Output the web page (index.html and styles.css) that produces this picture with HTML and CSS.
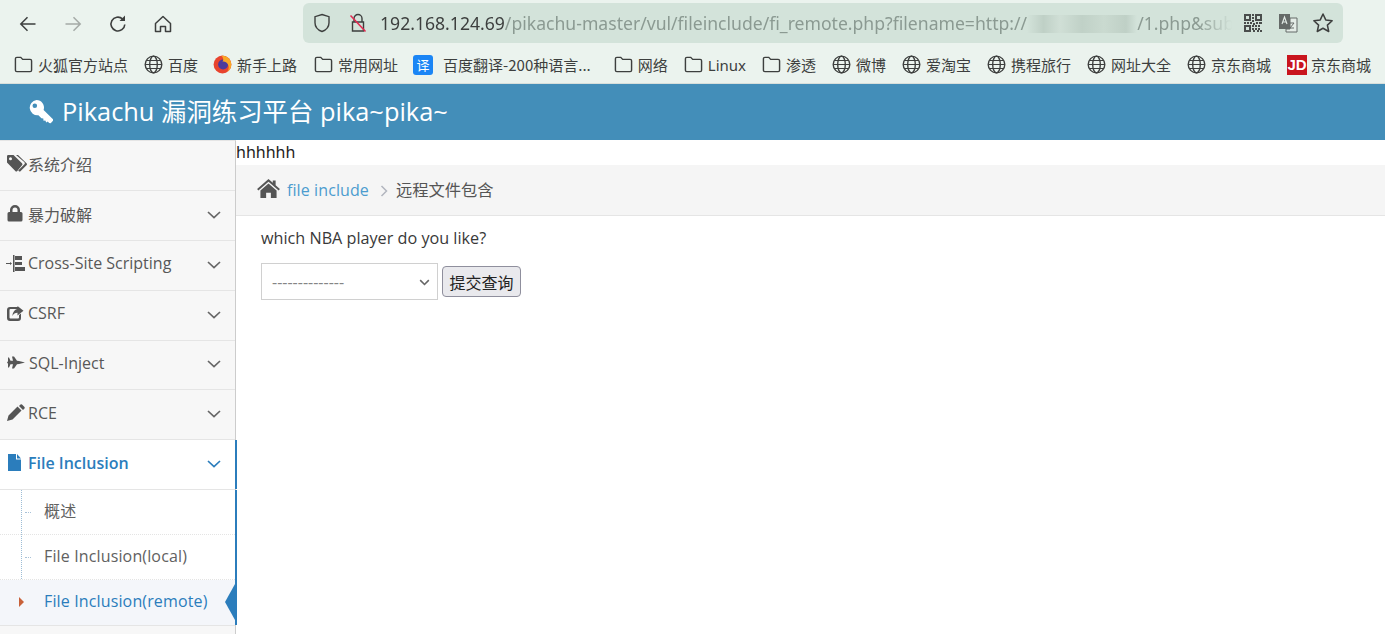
FILE: index.html
```html
<!DOCTYPE html>
<html lang="zh">
<head>
<meta charset="utf-8">
<title>Pikachu</title>
<link rel="stylesheet" href="styles.css">
</head>
<body>
<svg class="defs" width="0" height="0" aria-hidden="true">
  <defs>
    <symbol id="folder" viewBox="0 0 16 16"><path d="M1.200 3.200q0-1.200 1.200-1.200h3.300l1.600 1.700h6.300q1.200 0 1.200 1.200v7.900q0 1.200-1.200 1.200H2.400q-1.200 0-1.200-1.200z" fill="none" stroke="#3d3f3e" stroke-width="1.200"/></symbol>
    <symbol id="globe" viewBox="0 0 16 16"><g fill="none" stroke="#3d3f3e" stroke-width="1.150"><circle cx="8" cy="8" r="7"/><ellipse cx="8" cy="8" rx="3.200" ry="7"/><path d="M1 8h14M2 4.600h12M2 11.400h12" stroke-width=".9"/></g></symbol>
    <symbol id="chev" viewBox="0 0 14 8"><path d="M1 1l6 5.600L13 1" fill="none" stroke="currentColor" stroke-width="1.700"/></symbol>
  </defs>
</svg>

<div class="chrome">
  <div class="toolbar">
    <div class="nav">
      <svg class="nav-ico" viewBox="0 0 20 20"><path d="M17.500 10H3M9.500 3.200L2.800 10l6.700 6.800" fill="none" stroke="#3d3f3e" stroke-width="1.500"/></svg>
      <svg class="nav-ico" viewBox="0 0 20 20"><path d="M2.500 10H17M10.500 3.200l6.700 6.800-6.700 6.800" fill="none" stroke="#a5aaa7" stroke-width="1.500"/></svg>
      <svg class="nav-ico" viewBox="0 0 20 20"><path d="M16.800 10.500a6.900 6.900 0 1 1-2.300-5.600" fill="none" stroke="#3d3f3e" stroke-width="1.600"/><path d="M17 1.500v5.500h-5.500z" fill="#3d3f3e"/></svg>
      <svg class="nav-ico" viewBox="0 0 20 20"><path d="M2.500 9.500L10 2.500l7.500 7v8h-5v-5h-5v5h-5z" fill="none" stroke="#3d3f3e" stroke-width="1.500" stroke-linejoin="round"/></svg>
    </div>
    <div class="urlbar">
      <svg class="shield" viewBox="0 0 18 20"><path d="M9 1.500l7 2.200v6c0 4.300-3 7.300-7 8.800-4-1.500-7-4.500-7-8.800v-6z" fill="none" stroke="#3d3f3e" stroke-width="1.400"/></svg>
      <svg class="lock" viewBox="0 0 18 20"><path d="M5 9V5.500a4 4 0 0 1 8 0V9M3.500 9h11v9h-11z" fill="none" stroke="#3d3f3e" stroke-width="1.400"/><path d="M1.500 2.500l15 16" stroke="#e22850" stroke-width="1.500"/></svg>
      <div class="url"><span class="host">192.168.124.69</span>/pikachu-master/vul/fileinclude/fi_remote.php?filename=http://<span class="blur"></span>/1.php&amp;sub</div>
      <svg class="qr" viewBox="0 0 18 18"><path fill="#4a4d4c" fill-rule="evenodd" d="M0 0h7v7H0zM2 2v3h3V2zM11 0h7v7h-7zM13 2v3h3V2zM0 11h7v7H0zM2 13v3h3v-3zM8 0h2v2H8zM8 3h2v2H8zM8 6h2v2H8zM0 8h2v2H0zM3 8h2v2H3zM6 8h2v2H6zM9 9h2v2H9zM12 8h2v2h-2zM15 8h3v2h-3zM8 11h2v2H8zM11 11h2v2h-2zM14 11h2v2h-2zM8 14h2v2H8zM11 14h2v2h-2zM14 14h2v2h-2zM9 16h2v2H9zM13 16h2v2h-2zM16 16h2v2h-2z"/></svg>
      <svg class="trans" viewBox="0 0 20 20"><path d="M1 1h11v15H1z" fill="#656a68"/><path d="M12 5h7v14H8v-3h4z" fill="#e4ece7" stroke="#656a68"/><path d="M4 11l2.500-7L9 11M5 9h3" fill="none" stroke="#e4ece7" stroke-width="1.100"/><path d="M12 10h4l-4 5h4" fill="none" stroke="#656a68"/></svg>
      <svg class="star" viewBox="0 0 20 20"><path d="M10 1.800l2.500 5.400 5.800.7-4.300 4 1.200 5.800-5.200-2.900-5.200 2.900 1.200-5.800-4.300-4 5.800-.7z" fill="none" stroke="#3d3f3e" stroke-width="1.400" stroke-linejoin="round"/></svg>
    </div>
  </div>
  <div class="bookmarks">
    <div class="bm b1"><svg class="bi"><use href="#folder"/></svg>火狐官方站点</div>
    <div class="bm b2"><svg class="bi"><use href="#globe"/></svg>百度</div>
    <div class="bm b3"><svg class="bi" viewBox="0 0 16 16"><circle cx="8" cy="8" r="7.500" fill="#e8442e"/><circle cx="8.500" cy="8" r="4.200" fill="#4a3a9c"/><path d="M7 .6c4.500-.6 8.400 3 8.400 7.400 0 2.600-1.300 4.800-3.300 6.100 1.400-2 1.500-4.600.4-6.300C11.400 6 9.800 5.200 8 5.600c1-1.200 1-3.400-1-5z" fill="#f9a825"/></svg>新手上路</div>
    <div class="bm b4"><svg class="bi"><use href="#folder"/></svg>常用网址</div>
    <div class="bm b5"><span class="yi">译</span>百度翻译-200种语言...</div>
    <div class="bm b6"><svg class="bi"><use href="#folder"/></svg>网络</div>
    <div class="bm b7"><svg class="bi"><use href="#folder"/></svg>Linux</div>
    <div class="bm b8"><svg class="bi"><use href="#folder"/></svg>渗透</div>
    <div class="bm b9"><svg class="bi"><use href="#globe"/></svg>微博</div>
    <div class="bm b10"><svg class="bi"><use href="#globe"/></svg>爱淘宝</div>
    <div class="bm b11"><svg class="bi"><use href="#globe"/></svg>携程旅行</div>
    <div class="bm b12"><svg class="bi"><use href="#globe"/></svg>网址大全</div>
    <div class="bm b13"><svg class="bi"><use href="#globe"/></svg>京东商城</div>
    <div class="bm b14"><span class="jd">JD</span>京东商城</div>
  </div>
</div>

<header class="brand">
  <svg class="key" viewBox="0 0 24 24"><path fill="#fff" fill-rule="evenodd" d="M7.500 0a7.500 7.500 0 0 1 7.100 9.900L24 19.300v1.400l-2.300 2.600-1.600-.2-1.300-1.500-1.500 1-1-2.200-1.800.3-.2-2.100-1.900-.3-3-3A7.500 7.500 0 1 1 7.500 0zM5.800 3.500a2.300 2.300 0 1 0 0 4.600 2.300 2.300 0 0 0 0-4.600z"/></svg>
  <span>Pikachu 漏洞练习平台 pika~pika~</span>
</header>

<div class="main">
  <nav class="sidebar">
    <div class="item">
      <svg class="ico" viewBox="0 0 20 17"><path fill="#555" fill-rule="evenodd" d="M0 1.200Q0 0 1.200 0h5.300L15 8.200q1 1 0 2L10.300 16q-1 1-2 0L0 7.500zM3.500 2.300a1.500 1.500 0 1 0 0 3 1.500 1.500 0 0 0 0-3z"/><path fill="#555" d="M9 0h2l8.500 8.200q1 1 0 2l-5.800 5.800q-1 1-2 0l-.5-.5 6-6q1.300-1.300 0-2.600z"/></svg>
      <span class="label">系统介绍</span>
    </div>
    <div class="item">
      <svg class="ico" viewBox="0 0 20 17"><path fill="#555" d="M3 7V5a5 5 0 0 1 10 0v2h1q1.500 0 1.500 1.500V15q0 1.500-1.500 1.500H2Q.5 16.500.5 15V8.500Q.5 7 2 7zm2.500 0h5V5a2.500 2.500 0 0 0-5 0z"/></svg>
      <span class="label">暴力破解</span><svg class="chev"><use href="#chev"/></svg>
    </div>
    <div class="item">
      <svg class="ico wide" viewBox="0 0 20 17"><path fill="#555" d="M0 8h4v1H0zM4 7l2 1.500L4 10zM7 0h1.500v17H7zM9 1h4v4H9zM9 7h3v3H9zM9 12h10v4H9zM13 1h3v4h-3zM12 7h4v3h-4z"/></svg>
      <span class="label">Cross-Site Scripting</span><svg class="chev"><use href="#chev"/></svg>
    </div>
    <div class="item">
      <svg class="ico" viewBox="0 0 20 17"><path fill="#555" d="M3 2h8v2H3.500Q2.500 4 2.500 5v7.500q0 1 1 1H11q1 0 1-1V10l2-1.500V13q0 3-3 3H3q-3 0-3-3V5q0-3 3-3z"/><path fill="#555" d="M10.500 1l6 4.800-6 4.700V7.800C8 7.800 6.500 9 5.500 11c0-3.500 2-6.500 5-7z"/></svg>
      <span class="label">CSRF</span><svg class="chev"><use href="#chev"/></svg>
    </div>
    <div class="item">
      <svg class="ico" viewBox="0 0 20 17"><path fill="#555" d="M1 3.500h1L3.500 6.700H6L5 2.500h2l3 4.200 2 .2 6 1.600-6 1.600-2 .2-3 4.200H5l1-4.200H3.500L2 13.500H1V9.800L0 8.500l1-1.300z"/></svg>
      <span class="label sql">SQL-Inject</span><svg class="chev"><use href="#chev"/></svg>
    </div>
    <div class="item">
      <svg class="ico" viewBox="0 0 20 17"><path fill="#555" d="M13.500 0.500q1-.5 1.500 0l2.500 2.500q.5.500 0 1.500l-1.500 1.500-4-4zM10.500 2.500l4 4-9 9-5.500 1.500 1.500-5.500z"/></svg>
      <span class="label">RCE</span><svg class="chev"><use href="#chev"/></svg>
    </div>
    <div class="item open">
      <svg class="ico file" viewBox="0 0 20 17"><path fill="#2b7dbc" d="M0 0h8v5.500h5V17H0zM9 0l4 4.500H9z"/></svg>
      <span class="label">File Inclusion</span><svg class="chev"><use href="#chev"/></svg>
    </div>
    <ul class="sub">
      <li class="sub-item">概述</li>
      <li class="sub-item">File Inclusion(local)</li>
      <li class="sub-item active">File Inclusion(remote)</li>
    </ul>
  </nav>

  <div class="content">
    <div class="hhh">hhhhhh</div>
    <div class="crumbs">
      <svg class="home" viewBox="0 0 24 20"><path fill="#555" d="M12 0l4.500 4V1.500h3V6.700L24 10.500l-1.300 1.500L12 2.800 1.300 12 0 10.500zM3.500 12L12 4.700l8.500 7.300v8H14.500v-5.500h-5V20H3.500z"/></svg>
      <a class="link">file include</a>
      <svg class="sep" viewBox="0 0 8 12"><path d="M1.500 1l5 5-5 5" fill="none" stroke="#b2b6bf" stroke-width="1.500"/></svg>
      <span class="here">远程文件包含</span>
    </div>
    <div class="page">
      <p class="q">which NBA player do you like?</p>
      <form class="form">
        <div class="select">--------------<svg class="sel-chev" viewBox="0 0 14 8"><path d="M1.500 1L7 6.500 12.500 1" fill="none" stroke="#666" stroke-width="2"/></svg></div>
        <button class="btn" type="button">提交查询</button>
      </form>
    </div>
  </div>
</div>
</body>
</html>
```
FILE: styles.css
```css
* { box-sizing: border-box; }
html, body { margin: 0; height: 100%; overflow: hidden; }
body { font-family: "Open Sans", "Noto Sans CJK SC", sans-serif; font-size: 16px; color: #393939; background: #fff; display: flex; flex-direction: column; }
.defs { position: absolute; }

.chrome { background: #ebf3ee; height: 84px; border-bottom: 1px solid #d8dfdb; flex: none; }
.toolbar { height: 43px; padding-top: 3px; display: flex; }
.nav { width: 303px; display: flex; align-items: center; padding: 2px 0 0 18px; gap: 25px; }
.nav-ico { width: 20px; height: 20px; }
.urlbar { width: 1040px; height: 40px; background: #d3e3da; border-radius: 6px; display: flex; align-items: center; padding-left: 10px; }
.shield { width: 18px; height: 20px; }
.lock { width: 18px; height: 20px; margin-left: 18px; }
.url { font-family: "Noto Sans", sans-serif; font-size: 17.6px; color: #8b9a92; margin-left: 13px; width: 852px; white-space: nowrap; overflow: hidden; -webkit-mask-image: linear-gradient(90deg, #000 96%, transparent); mask-image: linear-gradient(90deg, #000 96%, transparent); }
.host { color: #3d3f3e; }
.blur { display: inline-block; width: 110px; height: 18px; vertical-align: -3px; background: linear-gradient(90deg, #d3e3da, #bfd0c6 15%, #d0dfd6 30%, #c0d1c7 50%, #cadad0 70%, #bfd0c6 90%, #d3e3da); }
.qr { width: 18px; height: 18px; margin-left: 12px; }
.trans { width: 20px; height: 20px; margin-left: 16px; }
.star { width: 22px; height: 22px; margin-left: 14px; }

.bookmarks { height: 40px; display: flex; align-items: center; padding: 3px 0 0 14px; font-family: "Noto Sans CJK SC", sans-serif; font-size: 15px; color: #3d3f3e; white-space: nowrap; }
.bm { display: flex; align-items: center; gap: 5px; }
.bi { width: 19px; height: 19px; flex: none; }
.b1 { margin-right: 16px; }
.b2 { margin-right: 15px; }
.b3 { margin-right: 17px; }
.b4 { margin-right: 15px; }
.b5 { margin-right: 23px; }
.b6 { margin-right: 16px; }
.b7 { margin-right: 16px; font-family: "Noto Sans", sans-serif; }
.b8, .b9, .b10, .b11, .b12, .b13 { margin-right: 16px; }
.b14 { gap: 4px; }
.yi { width: 20px; height: 20px; border-radius: 3px; background: #1a85f5; color: #fff; font-size: 13px; display: flex; align-items: center; justify-content: center; margin-right: 5px; }
.jd { width: 20px; height: 20px; background: #c9151e; color: #fff; font: 700 15px "Liberation Sans", sans-serif; display: flex; align-items: center; justify-content: center; }

.brand { height: 56px; background: #438eb9; color: #fff; display: flex; align-items: center; padding: 0 0 4px 29px; font-size: 25.4px; flex: none; }
.key { width: 24px; height: 24px; margin: 4px 9px 0 0; }

.main { flex: 1; display: flex; min-height: 0; }
.sidebar { width: 236px; flex: none; background: #f7f7f7; border-right: 1px solid #ccc; border-top: 1px solid #e5e5e5; padding-top: .4px; }
.item { height: 49.8px; border-bottom: 1px solid #e5e5e5; display: flex; align-items: center; padding: 0 0 4px 7px; color: #585858; font-size: 16px; }
.ico { width: 20px; height: 17px; flex: none; margin-right: 1px; }
.ico.wide { margin-left: -1px; margin-right: 2px; }
.ico.file { margin-left: 1px; margin-right: 0; }
.label { flex: 1; }
.label.sql { margin-left: 1px; }
.chev { width: 14px; height: 8px; margin: 3px 14px 0 0; color: #666; }
.item.open { background: #fff; color: #2b7dbc; font-weight: 600; position: relative; }
.item.open .chev { color: #2b7dbc; }
.sub { list-style: none; margin: 0; padding: 0; background: #fff; position: relative; border-bottom: 1px solid #e5e5e5; }
.sub::before { content: ""; position: absolute; left: 21px; top: 0; bottom: 0; border-left: 1px dotted #9dbdd6; }
.open::after, .sub::after { content: ""; position: absolute; right: -2px; top: 0; bottom: 0; width: 2px; background: #2b7dbc; }
.sub-item { height: 45px; display: flex; align-items: center; padding: 0 0 1px 44px; color: #616161; font-size: 16px; letter-spacing: .14px; border-bottom: 1px dotted #e4e4e4; position: relative; }
.sub-item:first-child { padding-bottom: 3px; }
.sub-item::before { content: ""; position: absolute; left: 25px; top: 50%; width: 6px; border-top: 1px dotted #a9c2d8; }
.sub-item.active { color: #2b7dbc; background: #f4f6fa; border-bottom: 0; padding-bottom: 2px; }
.sub-item.active::before { left: 19px; top: 50%; margin-top: -5px; width: 0; border: 0; border-left: 5px solid #c86139; border-top: 5px solid transparent; border-bottom: 5px solid transparent; }
.sub-item.active::after { content: ""; position: absolute; right: 0; top: 50%; margin-top: -18px; border: 18px solid transparent; border-right-width: 10px; border-left-width: 0; border-right-color: #2b7dbc; }

.content { flex: 1; min-width: 0; }
.hhh { height: 25px; line-height: 25px; font-family: "Noto Sans", sans-serif; font-size: 16px; color: #222; }
.crumbs { height: 51px; background: #f5f5f5; border-bottom: 1px solid #e5e5e5; display: flex; align-items: center; padding-left: 21px; font-size: 16px; }
.home { width: 23px; height: 19px; margin-right: 7px; margin-top: -3px; }
.link { color: #4c9ccf; letter-spacing: .1px; }
.sep { width: 8px; height: 12px; margin: 2px 8px 0 11px; }
.here { color: #555; font-size: 16.3px; margin-top: -2px; }
.page { padding-left: 25px; }
.q { margin: 11px 0 0; line-height: 22px; font-size: 16.2px; color: #393939; }
.form { display: flex; align-items: center; margin-top: 14px; }
.select { width: 177px; height: 37px; border: 1px solid #d0d0d0; background: #fff; color: #858585; font-size: 16px; display: flex; align-items: center; padding-left: 10px; position: relative; }
.sel-chev { width: 11px; height: 7px; position: absolute; right: 7px; top: 15px; }
.btn { width: 79px; height: 31px; margin-left: 4px; padding: 0; background: #e9e9ed; border: 1px solid #8f8f9d; border-radius: 4px; font: 16px "Noto Sans CJK SC", sans-serif; color: #222; }
```
